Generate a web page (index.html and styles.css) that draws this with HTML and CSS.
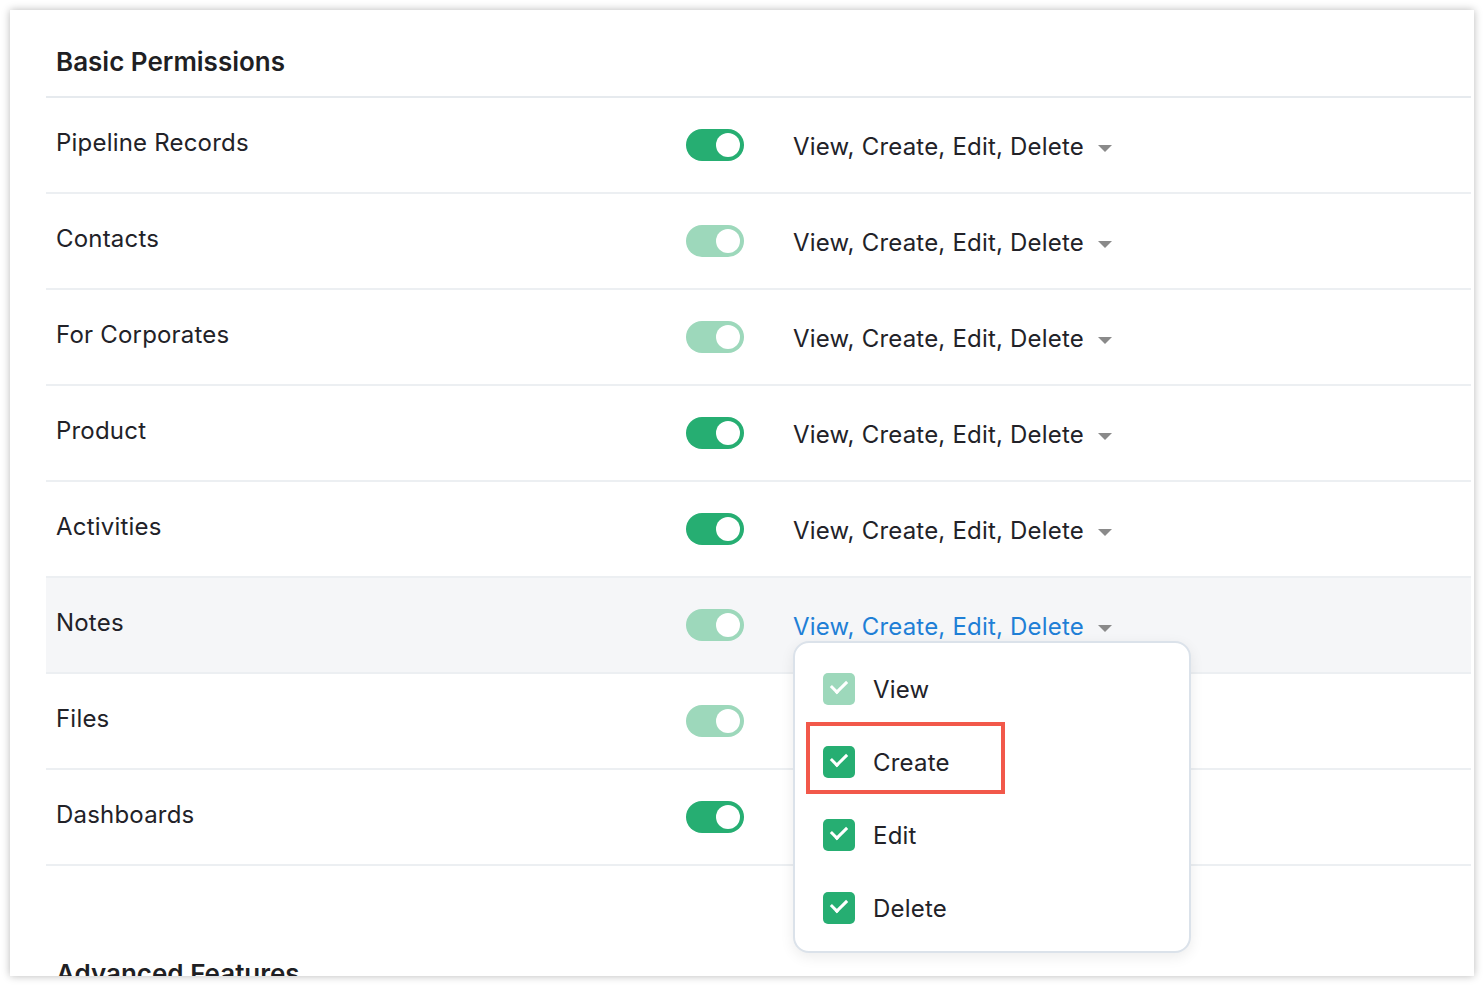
FILE: index.html
```html
<!DOCTYPE html>
<html lang="en">
<head>
<meta charset="UTF-8">
<title>Basic Permissions</title>
<link rel="stylesheet" href="styles.css">
</head>
<body>

<div class="panel">

<div class="section">
<h2 class="section-title">Basic Permissions</h2>

<div class="row">
<div class="label">Pipeline Records</div>
<span class="toggle on"></span>
<div class="value">View, Create, Edit, Delete <span class="caret"></span></div>
</div>

<div class="row">
<div class="label">Contacts</div>
<span class="toggle soft"></span>
<div class="value">View, Create, Edit, Delete <span class="caret"></span></div>
</div>

<div class="row">
<div class="label">For Corporates</div>
<span class="toggle soft"></span>
<div class="value">View, Create, Edit, Delete <span class="caret"></span></div>
</div>

<div class="row">
<div class="label">Product</div>
<span class="toggle on"></span>
<div class="value">View, Create, Edit, Delete <span class="caret"></span></div>
</div>

<div class="row">
<div class="label">Activities</div>
<span class="toggle on"></span>
<div class="value">View, Create, Edit, Delete <span class="caret"></span></div>
</div>

<div class="row active">
<div class="label">Notes</div>
<span class="toggle soft"></span>
<div class="value open">View, Create, Edit, Delete <span class="caret"></span>

<div class="menu">
<div class="option"><span class="check soft"></span>View</div>
<div class="option marked"><span class="check"></span>Create</div>
<div class="option"><span class="check"></span>Edit</div>
<div class="option"><span class="check"></span>Delete</div>
</div>

</div>
</div>

<div class="row">
<div class="label">Files</div>
<span class="toggle soft"></span>
<div class="value">View, Create, Edit, Delete <span class="caret"></span></div>
</div>

<div class="row">
<div class="label">Dashboards</div>
<span class="toggle on"></span>
<div class="value">View, Create, Edit, Delete <span class="caret"></span></div>
</div>
</div>

<div class="section">
<h2 class="section-title next">Advanced Features</h2>
</div>

</div>

</body>
</html>
```

FILE: styles.css
```css
*,*::before,*::after{box-sizing:border-box;}

body{
margin:0;
background:#fff;
font-family:Inter,"Noto Sans",sans-serif;
color:#222228;
}

.panel{
margin:10px;
height:966px;
overflow:hidden;
background:#fff;
box-shadow:0 0 8px rgba(0,0,0,.28);
}

.section{
padding:0 3px 0 36px;
}

.section-title{
margin:0;
height:88px;
padding:36px 0 0 10px;
font-size:26px;
font-weight:600;
color:#1f1f24;
border-bottom:2px solid #e6eaee;
}

.section-title.next{
border:none;
padding-top:92px;
}

.row{
display:flex;
align-items:center;
height:96px;
padding-left:10px;
border-bottom:2px solid #eceff2;
font-size:24px;
letter-spacing:.2px;
}

.row.active{
background:#f5f6f8;
}

.label{
width:630px;
margin-top:-6px;
}

.toggle{
position:relative;
width:58px;
height:32px;
border-radius:16px;
background:#26ae72;
}

.toggle.soft{
background:#9dd8bb;
}

.toggle::after{
content:"";
position:absolute;
top:4px;
right:4px;
width:24px;
height:24px;
border-radius:50%;
background:#fff;
}

.value{
position:relative;
margin-left:49px;
margin-top:2px;
display:flex;
align-items:center;
}

.value.open{
color:#1f7fd6;
}

.caret{
margin-left:14px;
margin-top:4px;
border-left:7px solid transparent;
border-right:7px solid transparent;
border-top:7px solid #8a8a8a;
}

.menu{
position:absolute;
top:29px;
left:0;
width:398px;
padding:10px 0 6px;
background:#fff;
border:2px solid #dbe2ea;
border-radius:16px;
box-shadow:0 4px 14px rgba(0,0,0,.08);
color:#222228;
letter-spacing:.2px;
z-index:5;
}

.option{
position:relative;
display:flex;
align-items:center;
height:73px;
padding-left:28px;
}

.option.marked::after{
content:"";
position:absolute;
top:-4px;
left:11px;
width:199px;
height:72px;
border:4px solid #f2584a;
}

.check{
position:relative;
width:32px;
height:32px;
margin-right:18px;
border-radius:5px;
background:#26ae72;
}

.check.soft{
background:#9dd8bb;
}

.check::after{
content:"";
position:absolute;
left:8px;
top:7px;
width:16px;
height:10px;
border-left:3px solid #fff;
border-bottom:3px solid #fff;
transform:rotate(-45deg);
}
```
